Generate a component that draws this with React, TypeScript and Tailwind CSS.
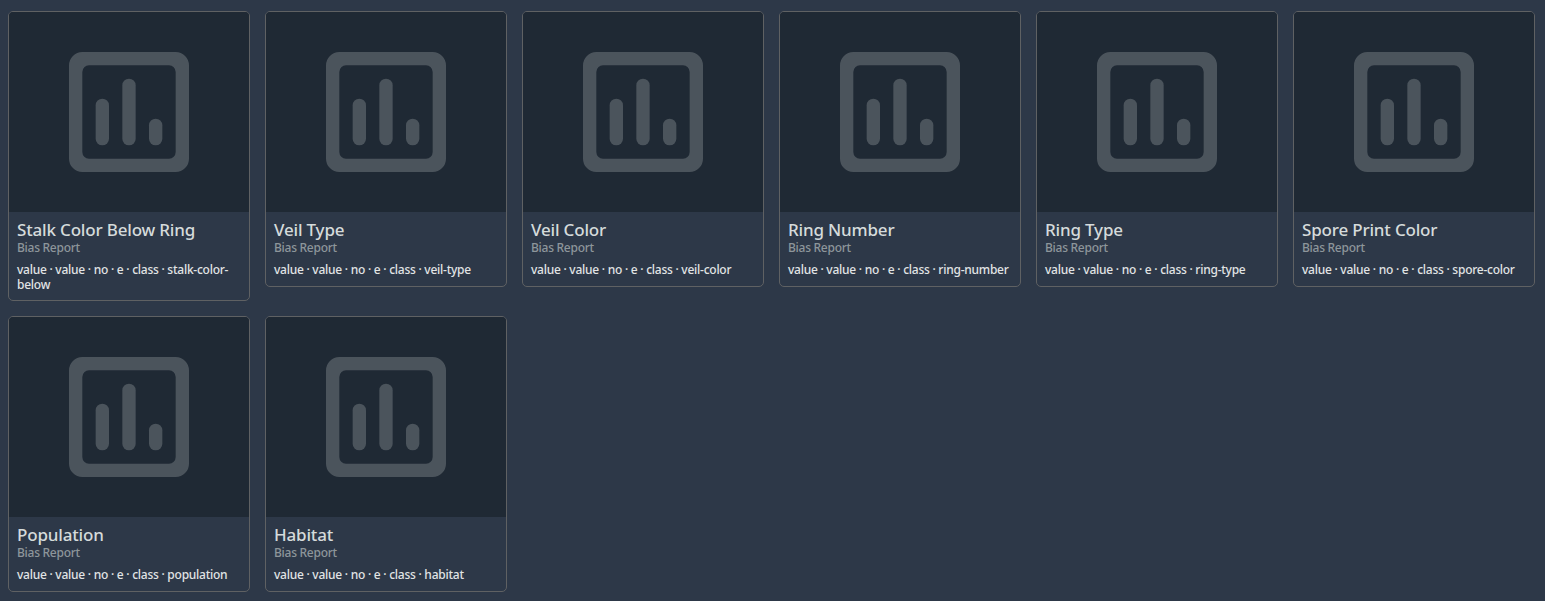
const reports = [
  { title: 'Stalk Color Below Ring', feature: 'stalk-color-below' },
  { title: 'Veil Type', feature: 'veil-type' },
  { title: 'Veil Color', feature: 'veil-color' },
  { title: 'Ring Number', feature: 'ring-number' },
  { title: 'Ring Type', feature: 'ring-type' },
  { title: 'Spore Print Color', feature: 'spore-color' },
  { title: 'Population', feature: 'population' },
  { title: 'Habitat', feature: 'habitat' },
];

function ChartIcon() {
  return (
    <svg viewBox="0 0 18 18" className="size-[120px] text-[#4b545c]" fill="currentColor" aria-hidden="true">
      <path
        fillRule="evenodd"
        d="M2 0h14a2 2 0 0 1 2 2v14a2 2 0 0 1-2 2H2a2 2 0 0 1-2-2V2a2 2 0 0 1 2-2zM3 2a1 1 0 0 0-1 1v12a1 1 0 0 0 1 1h12a1 1 0 0 0 1-1V3a1 1 0 0 0-1-1z"
      />
      <rect x="4" y="7" width="2" height="7" rx="1" />
      <rect x="8" y="4" width="2" height="10" rx="1" />
      <rect x="12" y="10" width="2" height="4" rx="1" />
    </svg>
  );
}

function ReportCard({ title, feature }: { title: string; feature: string }) {
  return (
    <article className="w-[242px] overflow-hidden rounded-[5px] border border-[#5f6163]">
      <div className="flex h-[200px] items-center justify-center bg-[#1f2934]">
        <ChartIcon />
      </div>
      <div className="px-2 pt-2 pb-[8.05px]">
        <h2 className="text-[17px] leading-5 font-medium tracking-[-0.18px] text-[#d5dbdb]">{title}</h2>
        <p className="text-xs leading-4 font-medium tracking-[-0.27px] text-[#8d969b]">Bias Report</p>
        <p className="mt-[6.6px] text-xs leading-[14.9px] font-medium tracking-[-0.25px] text-[#e1e4e5]">
          value · value · no · e · class · {feature}
        </p>
      </div>
    </article>
  );
}

export default function App() {
  return (
    <main className="min-h-screen bg-[#2d3848] pt-[11px] pl-2 font-['Noto_Sans',sans-serif]">
      <div className="flex flex-wrap items-start gap-[15px]">
        {reports.map((report) => (
          <ReportCard key={report.title} {...report} />
        ))}
      </div>
    </main>
  );
}
